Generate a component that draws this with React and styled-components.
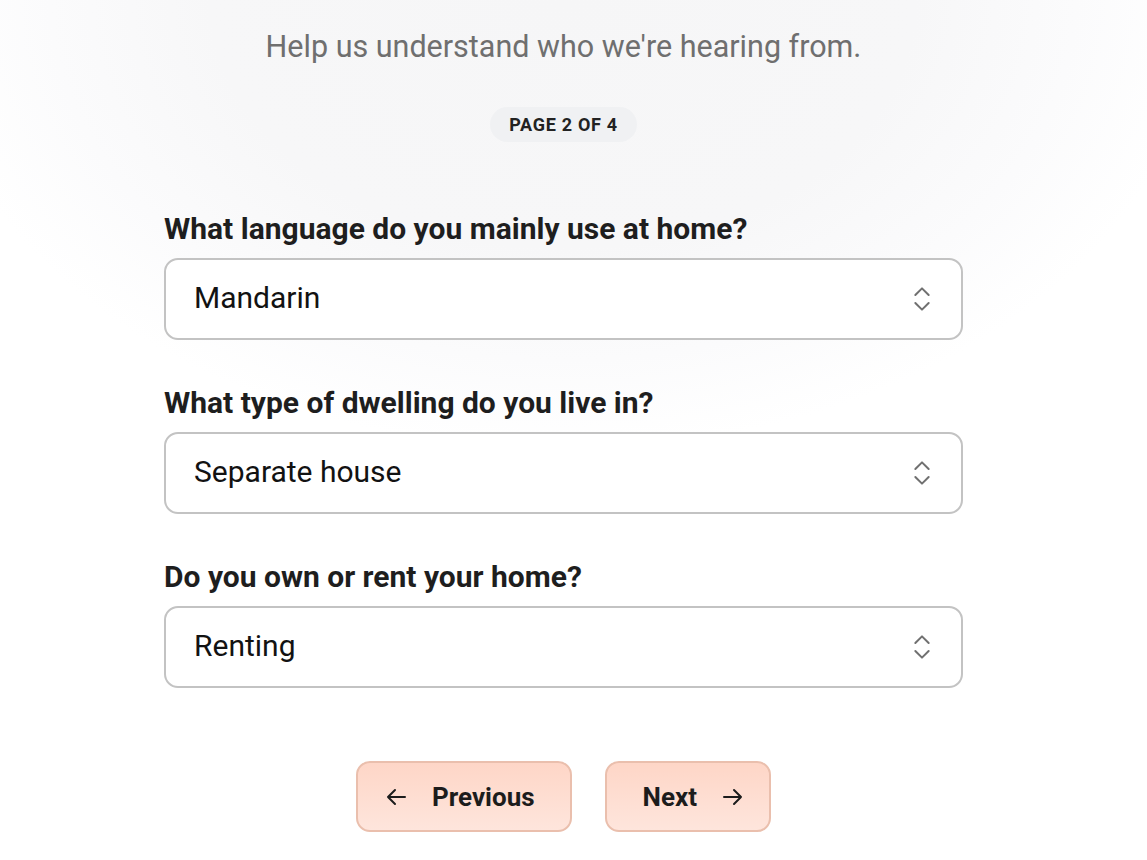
import React from "react";
import styled, { createGlobalStyle } from "styled-components";
import { ChevronsUpDown } from "lucide-react";

const GlobalStyle = createGlobalStyle`
  html, body {
    margin: 0;
    padding: 0;
    background: #ffffff;
  }

  body {
    font-family: Roboto, "Noto Sans", Arial, sans-serif;
    color: #1c1c1c;
  }
`;

const fields = [
  { label: "What language do you mainly use at home?", value: "Mandarin" },
  { label: "What type of dwelling do you live in?", value: "Separate house" },
  { label: "Do you own or rent your home?", value: "Renting" },
];

const ArrowIcon = ({ dir }) => (
  <svg width="20" height="18" viewBox="0 0 20 18" fill="none">
    {dir === "left" ? (
      <path
        d="M19 9H2M9 2L2 9l7 7"
        stroke="#1c1c1c"
        strokeWidth="2"
        strokeLinecap="round"
        strokeLinejoin="round"
      />
    ) : (
      <path
        d="M1 9h17M11 2l7 7-7 7"
        stroke="#1c1c1c"
        strokeWidth="2"
        strokeLinecap="round"
        strokeLinejoin="round"
      />
    )}
  </svg>
);

const App = () => {
  return (
    <Page>
      <GlobalStyle />
      <Container>
        <Subtitle>Help us understand who we're hearing from.</Subtitle>
        <Badge>Page 2 of 4</Badge>

        <Form>
          {fields.map((f) => (
            <Field key={f.label}>
              <Label>{f.label}</Label>
              <Select>
                <span>{f.value}</span>
                <ChevronsUpDown size={32} strokeWidth={1.5} color="#707070" />
              </Select>
            </Field>
          ))}
        </Form>

        <Actions>
          <NavButton $side="left">
            <ArrowIcon dir="left" />
            Previous
          </NavButton>
          <NavButton $side="right">
            Next
            <ArrowIcon dir="right" />
          </NavButton>
        </Actions>
      </Container>
    </Page>
  );
};

const Page = styled.div`
  min-height: 860px;
  box-sizing: border-box;
  padding-right: 20px;
  background: radial-gradient(
    ellipse 640px 450px at 563px 0,
    #f6f6f7 0%,
    #f7f7f8 55%,
    #fbfbfc 80%,
    #ffffff 100%
  );
`;

const Container = styled.div`
  width: 799px;
  margin: 0 auto;
  display: flex;
  flex-direction: column;
  align-items: center;
  padding-top: 28px;
`;

const Subtitle = styled.p`
  margin: 0;
  font-size: 30.5px;
  line-height: 38px;
  font-weight: 400;
  color: #6f6f6f;
`;

const Badge = styled.div`
  margin-top: 41px;
  height: 35px;
  box-sizing: border-box;
  padding: 0 19px;
  display: flex;
  align-items: center;
  border-radius: 18px;
  background: #f0f1f3;
  font-size: 18px;
  font-weight: 700;
  letter-spacing: 0.7px;
  text-transform: uppercase;
  color: #222222;
`;

const Form = styled.div`
  align-self: stretch;
  margin-top: 70px;
  display: flex;
  flex-direction: column;
  gap: 46px;
`;

const Field = styled.div`
  display: flex;
  flex-direction: column;
  gap: 12px;
`;

const Label = styled.div`
  font-size: 30px;
  line-height: 34px;
  font-weight: 700;
  color: #1e1e1e;
`;

const Select = styled.div`
  height: 82px;
  box-sizing: border-box;
  border: 2px solid #c3c3c3;
  border-radius: 14px;
  background: #ffffff;
  padding: 0 23px 0 28px;
  display: flex;
  align-items: center;
  justify-content: space-between;
  font-size: 30px;
  line-height: 36px;
  color: #121212;

  span {
    margin-top: -3px;
  }
`;

const Actions = styled.div`
  margin-top: 73px;
  display: flex;
  gap: 33px;
`;

const NavButton = styled.button`
  height: 71px;
  box-sizing: border-box;
  display: flex;
  align-items: center;
  gap: 26px;
  padding: ${(p) => (p.$side === "left" ? "0 35px 0 28px" : "0 26px 0 36px")};
  border: 2px solid #eabfad;
  border-radius: 14px;
  background: linear-gradient(180deg, #fed6c7 0%, #fee5dc 100%);
  font-family: inherit;
  font-size: 26px;
  font-weight: 700;
  color: #1c1c1c;
  cursor: pointer;
`;

export default App;
